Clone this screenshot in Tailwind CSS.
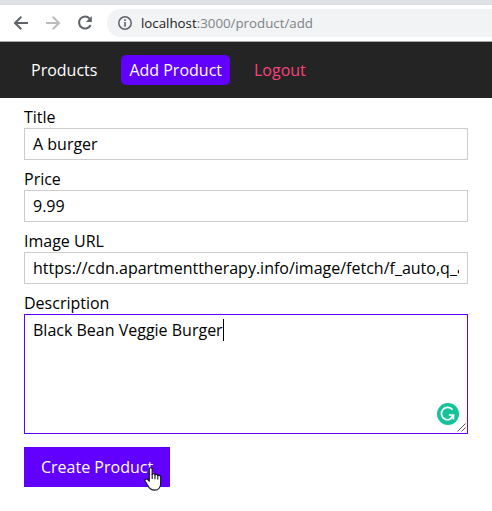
<!DOCTYPE html>
<html lang="en">
<head>
<meta charset="utf-8">
<title>Add Product</title>
<script src="https://cdn.jsdelivr.net/npm/@tailwindcss/browser@4"></script>
</head>
<body class="bg-white text-black text-[16px] leading-[22px] font-['Open_Sans',sans-serif] h-[511px] overflow-hidden">
<div class="h-[5px] bg-[#dee1e6]"></div>
<div class="h-[37px] border-b border-[#a9a9a9] bg-white flex items-center pl-[13px]">
  <svg class="w-4 h-4 shrink-0" viewBox="0 0 16 16" fill="none" stroke="#5f6368" stroke-width="2"><path d="M15 8H2M8.3 1.7L2 8L8.3 14.3"/></svg>
  <svg class="w-4 h-4 shrink-0 ml-4" viewBox="0 0 16 16" fill="none" stroke="#babcbe" stroke-width="2"><path d="M1 8H14M7.7 1.7L14 8L7.7 14.3"/></svg>
  <svg class="w-4 h-4 shrink-0 ml-4" viewBox="0 0 16 16"><path d="M12.6 3.6A6 6 0 1 0 13.6 10" fill="none" stroke="#5f6368" stroke-width="2"/><path d="M14.8 1V7H8.8Z" fill="#5f6368"/></svg>
  <div class="ml-[14px] h-7 flex-1 rounded-l-full bg-[#f1f3f4] flex items-center pl-[11px]">
    <svg class="w-[14px] h-[14px] shrink-0" viewBox="0 0 14 14"><circle cx="7" cy="7" r="6.2" fill="none" stroke="#5f6368" stroke-width="1.5"/><path d="M6.2 3.3h1.6v1.6H6.2zM6.2 6h1.6v4.7H6.2z" fill="#5f6368"/></svg>
    <span class="ml-[9px] text-[13.3px] whitespace-nowrap text-[#808488]"><span class="text-[#202124]">localhost</span>:3000/product/add</span>
  </div>
</div>
<nav class="h-14 bg-[#242424] text-white flex items-center pl-[23px] gap-4">
  <a class="px-2 h-[30px] leading-[30px]">Products</a>
  <a class="px-2 h-[30px] leading-[30px] rounded-[5px] bg-[#6200ff]">Add Product</a>
  <a class="px-2 h-[30px] leading-[30px] text-[#f9437c]">Logout</a>
</nav>
<form class="px-6 pt-2">
  <label class="block">Title</label>
  <div class="h-8 border border-[#ccc] px-2 leading-[30px] mb-2">A burger</div>
  <label class="block">Price</label>
  <div class="h-8 border border-[#ccc] px-2 leading-[30px] mb-2">9.99</div>
  <label class="block">Image URL</label>
  <div class="h-8 border border-[#ccc] px-2 leading-[30px] mb-2"><div class="overflow-hidden whitespace-nowrap">https://cdn.apartmenttherapy.info/image/fetch/f_auto,q_a</div></div>
  <label class="block">Description</label>
  <div class="relative h-[120px] border border-[#6200ff] px-2 py-1 mb-[13px]">
    <div class="flex"><span>Black Bean Veggie Burger</span><span class="w-px h-[22px] bg-black"></span></div>
    <svg class="absolute right-[8px] bottom-[8px] w-[22px] h-[22px]" viewBox="0 0 22 22"><circle cx="11" cy="11" r="11" fill="#15c39a"/><path d="M15.6 6.8A6.2 6.2 0 1 0 16.6 12.2" fill="none" stroke="#fff" stroke-width="1.7"/><path d="M11.8 12H16.5V16.6M16.3 12.3L13.2 16" fill="none" stroke="#fff" stroke-width="1.6"/></svg>
    <svg class="absolute right-px bottom-px w-[9px] h-[9px]" viewBox="0 0 9 9" fill="none" stroke="#555" stroke-width="1"><path d="M.5 8.5L8.5 .5M4.5 8.5L8.5 4.5"/></svg>
  </div>
  <div class="relative w-[146px] h-10 bg-[#6200ff] text-white leading-10 pl-[17px] whitespace-nowrap">Create Product
    <svg class="absolute left-[120px] top-[20px] w-[18px] h-[24px]" viewBox="0 0 18 24"><path d="M5.3 14V2.2C5.3.2 8.2.2 8.2 2.2V7.5C8.6 6.4 10.8 6.5 11 8C11.6 7 13.6 7.2 13.8 8.7C14.6 7.9 16.7 8.3 16.7 10V16C16.7 20.5 14 23.2 10.7 23.2C7 23.2 5.2 21.5 4 18.8L1.1 14C.3 12.4 2.4 11.2 3.5 12.5Z" fill="#fff" stroke="#16162a" stroke-width="1.2" stroke-linejoin="round"/><path d="M8.2 7v5M11 8v4.2M13.8 8.8v3.6" stroke="#16162a" stroke-width="1.1"/></svg>
  </div>
</form>
</body>
</html>
